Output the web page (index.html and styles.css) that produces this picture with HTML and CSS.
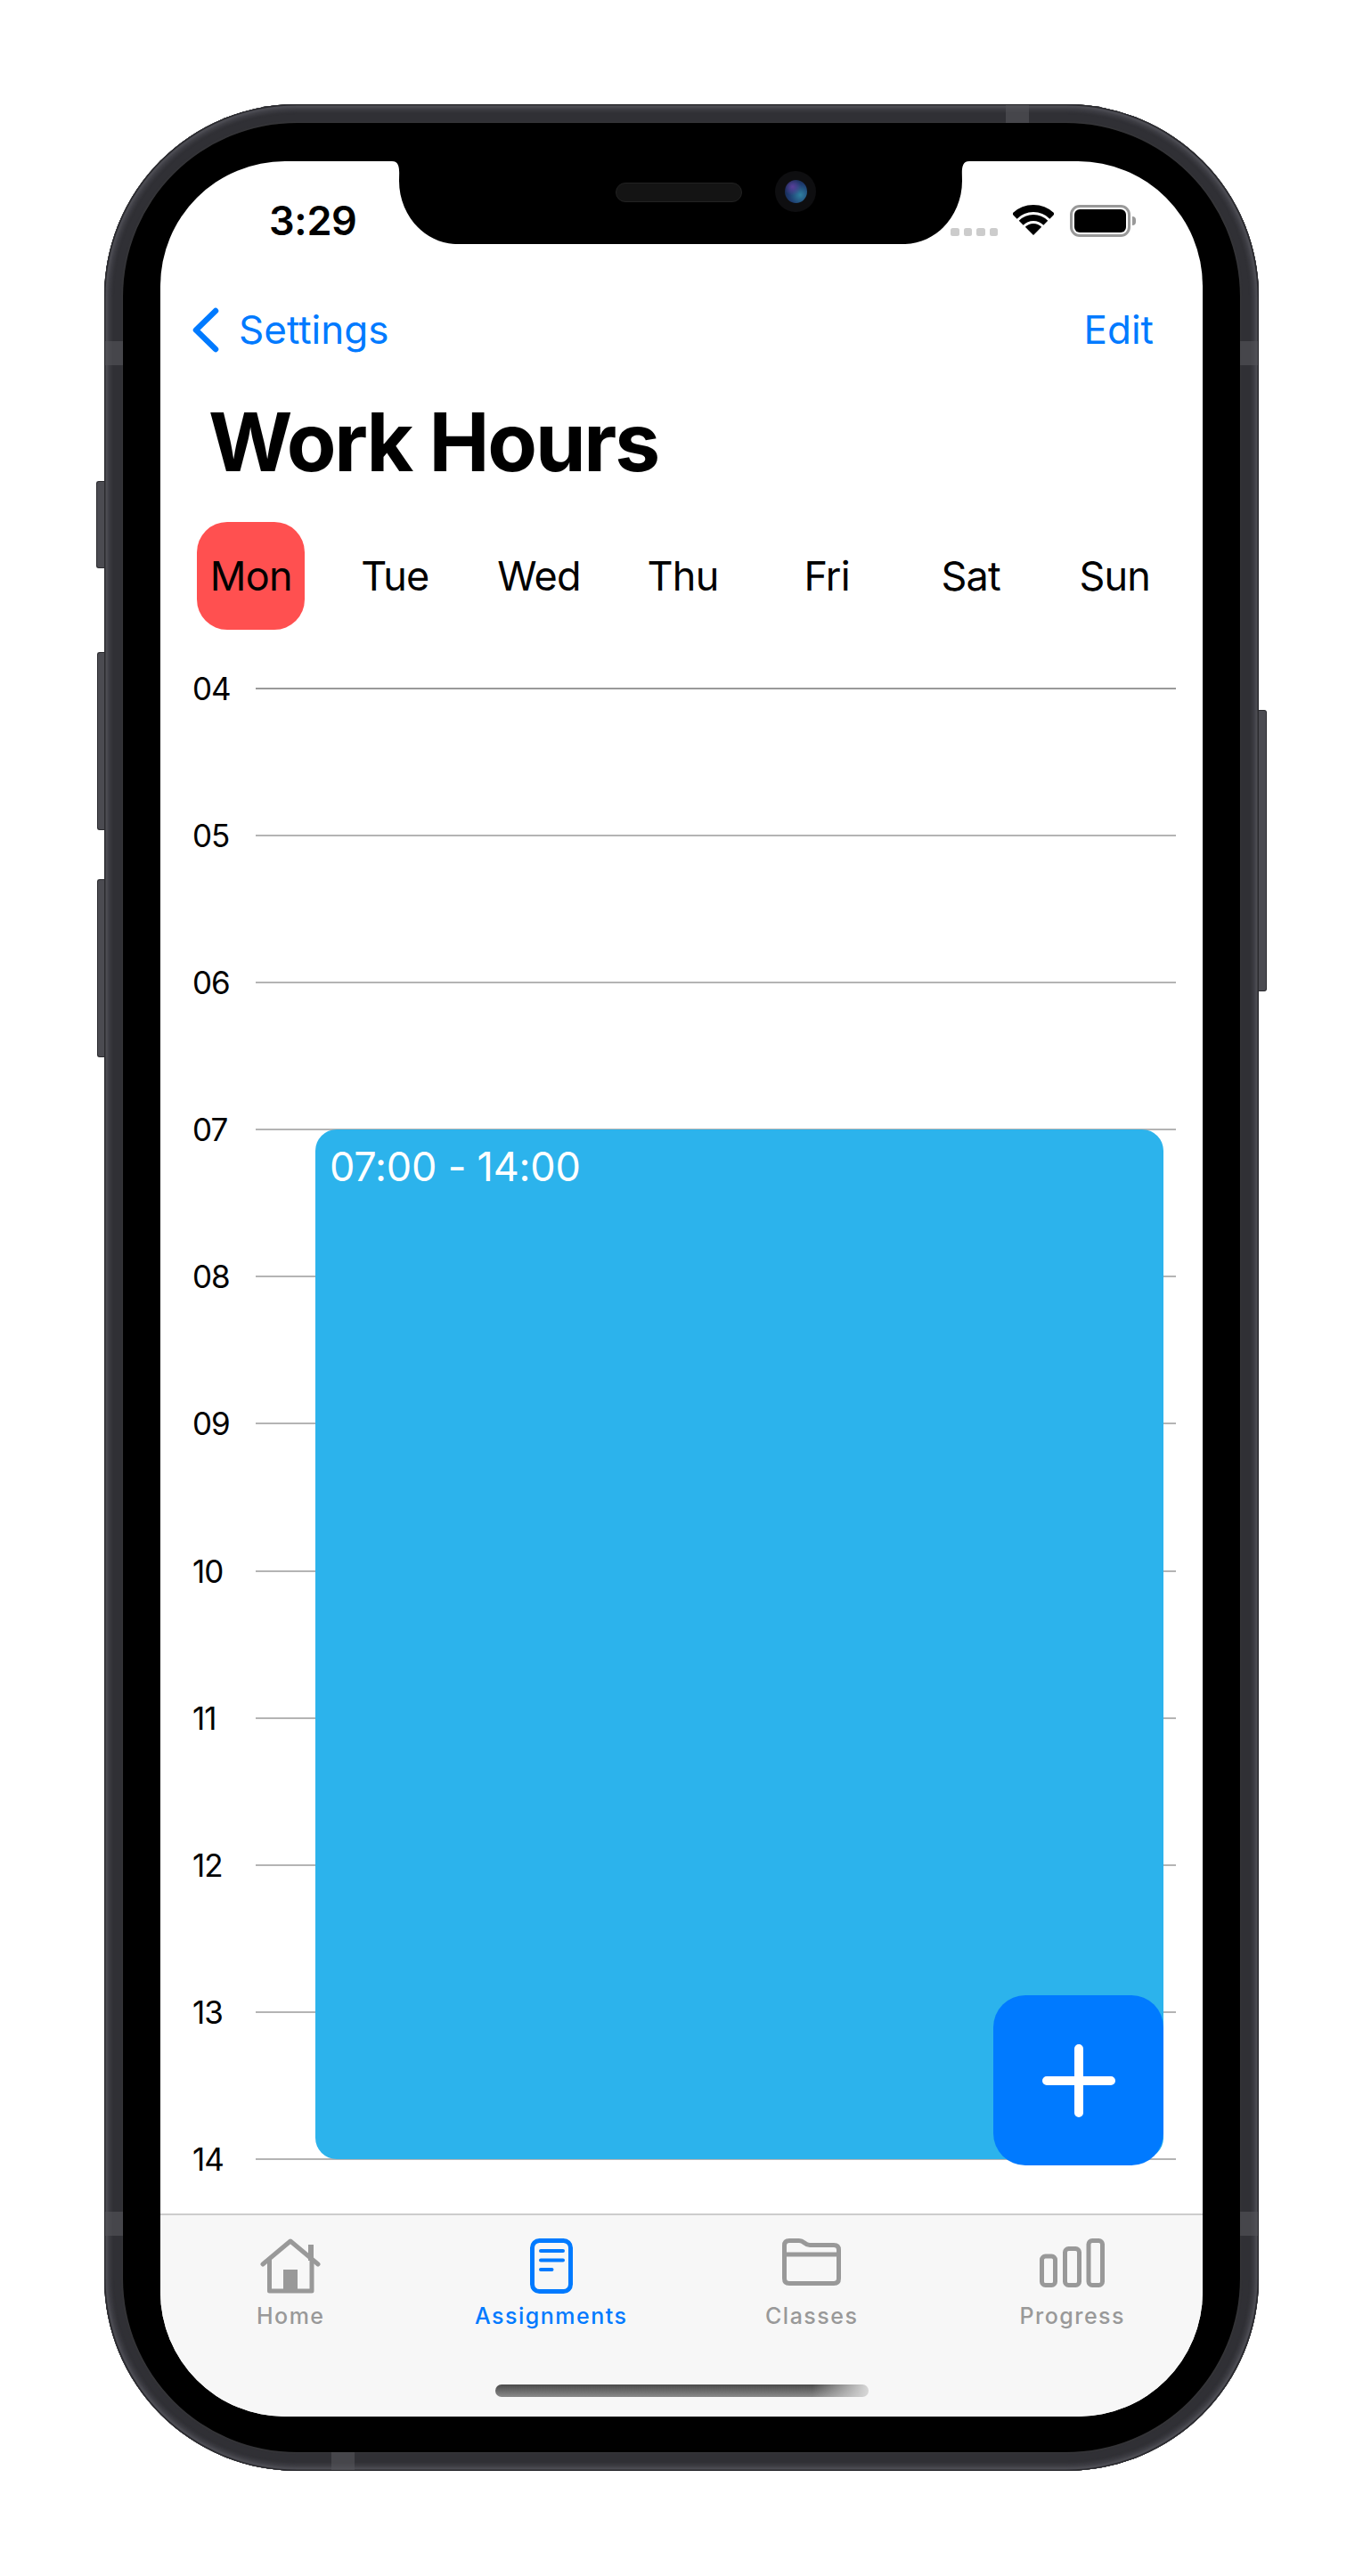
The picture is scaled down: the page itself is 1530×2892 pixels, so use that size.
FILE: index.html
```html
<!DOCTYPE html>
<html lang="en">
  <head>
    <meta charset="UTF-8" />
    <meta name="viewport" content="width=device-width, initial-scale=1.0" />
    <title>Work Hours</title>
    <link rel="stylesheet" href="styles.css">
  </head>

  <body>
    <div class="phone">
      <!-- side buttons and antenna bands of the device -->
      <span class="side-btn mute"></span>
      <span class="side-btn vol-up"></span>
      <span class="side-btn vol-down"></span>
      <span class="side-btn power"></span>
      <span class="band band-top"></span>
      <span class="band band-bottom"></span>
      <span class="band band-left-a"></span>
      <span class="band band-left-b"></span>
      <span class="band band-right-a"></span>
      <span class="band band-right-b"></span>

      <div class="screen">
        <svg class="notch" width="648" height="94" viewBox="0 0 648 94">
          <path d="M0 0 H648 C638 0 640 12 640 22 C640 60 612 93 574 93 H74 C36 93 8 60 8 22 C8 12 10 0 0 0 Z" fill="#000" />
        </svg>
        <span class="speaker"></span>
        <span class="camera"><span class="lens"></span></span>

        <div class="status">
          <span class="time">3:29</span>
          <div class="status-right">
            <div class="signal"><i></i><i></i><i></i><i></i></div>
            <svg class="wifi" width="46" height="35" viewBox="0 0 46 35">
              <path d="M1.8 12.8 A30 30 0 0 1 44.2 12.8" fill="none" stroke="#000" stroke-width="8" />
              <path d="M9.2 20.2 A19.5 19.5 0 0 1 36.8 20.2" fill="none" stroke="#000" stroke-width="7" />
              <path d="M23 34 L13.8 24.8 A13 13 0 0 1 32.2 24.8 Z" fill="#000" />
            </svg>
            <div class="battery"><span class="battery-level"></span></div>
          </div>
        </div>

        <div class="navbar">
          <a class="back">
            <svg width="31" height="51" viewBox="0 0 31 51">
              <path d="M27 4 L5 25.5 L27 47" fill="none" stroke="#007aff" stroke-width="6.5" stroke-linecap="round" stroke-linejoin="round" />
            </svg>
            Settings
          </a>
          <a class="edit">Edit</a>
        </div>

        <h1 class="title">Work Hours</h1>

        <div class="days">
          <div class="day active"><span>Mon</span></div>
          <div class="day"><span>Tue</span></div>
          <div class="day"><span>Wed</span></div>
          <div class="day"><span>Thu</span></div>
          <div class="day"><span>Fri</span></div>
          <div class="day"><span>Sat</span></div>
          <div class="day"><span>Sun</span></div>
        </div>

        <div class="timetable">
          <div class="hour"><span>04</span><i></i></div>
          <div class="hour"><span>05</span><i></i></div>
          <div class="hour"><span>06</span><i></i></div>
          <div class="hour"><span>07</span><i></i></div>
          <div class="hour"><span>08</span><i></i></div>
          <div class="hour"><span>09</span><i></i></div>
          <div class="hour"><span>10</span><i></i></div>
          <div class="hour"><span>11</span><i></i></div>
          <div class="hour"><span>12</span><i></i></div>
          <div class="hour"><span>13</span><i></i></div>
          <div class="hour"><span>14</span><i></i></div>

          <div class="event">07:00 - 14:00</div>
          <button class="fab" type="button">
            <svg width="82" height="82" viewBox="0 0 82 82">
              <path d="M41 5 V77 M5 41 H77" stroke="#fff" stroke-width="10" stroke-linecap="round" />
            </svg>
          </button>
        </div>

        <div class="tabbar">
          <div class="tab">
            <svg width="68" height="62" viewBox="0 0 68 62">
              <rect x="54" y="7" width="6" height="18" fill="#999" />
              <path d="M3 29 L34 3 L65 29" fill="none" stroke="#999" stroke-width="5" stroke-linecap="round" stroke-linejoin="round" />
              <path d="M10.5 22 V59 H58 V22" fill="none" stroke="#999" stroke-width="5" stroke-linejoin="round" />
              <rect x="26" y="35" width="16" height="24" fill="#999" />
            </svg>
            <span>Home</span>
          </div>
          <div class="tab current">
            <svg width="48" height="62" viewBox="0 0 48 62">
              <rect x="2.5" y="2.5" width="43" height="57" rx="8" fill="none" stroke="#007aff" stroke-width="5" />
              <path d="M12 14 H37 M12 24.5 H37 M12 35 H24.5" stroke="#007aff" stroke-width="4" stroke-linecap="round" />
            </svg>
            <span>Assignments</span>
          </div>
          <div class="tab">
            <svg width="66" height="62" viewBox="0 0 66 62">
              <path d="M2.5 18 V8 Q2.5 2.5 8 2.5 H19 C25 2.5 25 7.5 31 7.5 H58 Q63.5 7.5 63.5 13 V45 Q63.5 50.5 58 50.5 H8 Q2.5 50.5 2.5 45 Z M2.5 18 H63.5" fill="none" stroke="#999" stroke-width="5" stroke-linejoin="round" />
            </svg>
            <span>Classes</span>
          </div>
          <div class="tab">
            <svg width="73" height="62" viewBox="0 0 73 62">
              <rect x="2.5" y="20" width="15" height="32.5" rx="4" fill="none" stroke="#999" stroke-width="5" />
              <rect x="28.5" y="11.5" width="16" height="41" rx="4" fill="none" stroke="#999" stroke-width="5" />
              <rect x="55" y="2.5" width="15.5" height="50" rx="4" fill="none" stroke="#999" stroke-width="5" />
            </svg>
            <span>Progress</span>
          </div>
          <span class="home-indicator"></span>
        </div>
      </div>
    </div>
  </body>
</html>
```

FILE: styles.css
```css
* {
  margin: 0;
  padding: 0;
  box-sizing: border-box;
}
body {
  font-family: Inter, "Noto Sans", sans-serif;
  background-color: #ffffff;
  color: #000000;
}

/* device */
.phone {
  position: relative;
  width: 1296px;
  height: 2657px;
  margin: 117px 0 0 117px;
  padding: 64px 63px 61px;
  background-color: #000000;
  border-radius: 216px;
  box-shadow:
    inset 0 0 0 1.5px #2a2a2e,
    inset 0 0 3px 4px #4f4f56,
    inset 0 0 3px 8px #3c3c42,
    inset 0 0 2px 20px #303035,
    inset 0 0 0 21px #38383a;
}
.side-btn {
  position: absolute;
  background-color: #4b4b51;
  border: 1.5px solid #2b2b2f;
}
.mute,
.vol-up,
.vol-down {
  right: 100%;
  border-right: 0;
  border-radius: 3px 0 0 3px;
}
.mute {
  top: 423px;
  width: 9px;
  height: 98px;
}
.vol-up {
  top: 615px;
  width: 8px;
  height: 200px;
}
.vol-down {
  top: 870px;
  width: 8px;
  height: 200px;
}
.power {
  left: 100%;
  top: 680px;
  width: 9px;
  height: 316px;
  border-left: 0;
  border-radius: 0 3px 3px 0;
}
.band {
  position: absolute;
  background-color: #55555a;
  opacity: 0.6;
}
.band-top {
  top: 1px;
  left: 1012px;
  width: 26px;
  height: 20px;
}
.band-bottom {
  bottom: 1px;
  left: 255px;
  width: 26px;
  height: 20px;
}
.band-left-a,
.band-left-b {
  left: 1px;
  width: 20px;
  height: 27px;
}
.band-right-a,
.band-right-b {
  right: 1px;
  width: 20px;
  height: 27px;
}
.band-left-a,
.band-right-a {
  top: 266px;
}
.band-left-b,
.band-right-b {
  top: 2366px;
}

.screen {
  position: relative;
  display: flex;
  flex-direction: column;
  width: 1170px;
  height: 2532px;
  background-color: #ffffff;
  border-radius: 140px;
  overflow: hidden;
}
.notch {
  position: absolute;
  top: 0;
  left: 260px;
}
.speaker {
  position: absolute;
  top: 24px;
  left: 511px;
  width: 142px;
  height: 22px;
  background-color: #141414;
  border: 1px solid #222222;
  border-radius: 11px;
}
.camera {
  position: absolute;
  top: 11px;
  left: 690px;
  width: 46px;
  height: 46px;
  display: flex;
  align-items: center;
  justify-content: center;
  background-color: #0e0e10;
  border-radius: 50%;
}
.lens {
  width: 25px;
  height: 26px;
  border-radius: 50%;
  background:
    radial-gradient(circle at 35% 30%, #5a3f9a 0, transparent 40%),
    radial-gradient(circle at 70% 65%, #2f7f9f 0, #1d3c70 50%, #141a3a 100%);
}

/* status bar */
.status {
  display: flex;
  justify-content: space-between;
  padding: 49px 81px 0 122px;
}
.time {
  font-size: 45px;
  font-weight: 600;
  line-height: 36px;
  letter-spacing: -0.3px;
}
.status-right {
  display: flex;
  align-items: flex-end;
}
.signal {
  display: flex;
  gap: 5px;
  margin-right: 17px;
  padding-bottom: 1px;
}
.signal i {
  width: 9.5px;
  height: 9px;
  background-color: #cccccc;
  border-radius: 2.5px;
}
.wifi {
  margin-right: 18px;
  margin-bottom: 1px;
}
.battery {
  position: relative;
  width: 68px;
  height: 36px;
  padding: 2px;
  border: 3px solid #999999;
  border-radius: 11px;
}
.battery::after {
  content: "";
  position: absolute;
  top: 10px;
  left: 67px;
  width: 4px;
  height: 10px;
  background-color: #999999;
  border-radius: 0 4px 4px 0;
}
.battery-level {
  display: block;
  height: 100%;
  background-color: #000000;
  border-radius: 6px;
}

/* nav */
.navbar {
  display: flex;
  justify-content: space-between;
  align-items: center;
  height: 60px;
  margin-top: 74px;
  padding: 0 55px 0 35px;
  font-size: 44px;
  color: #007aff;
}
.back {
  display: flex;
  align-items: center;
  gap: 22px;
}
.title {
  margin-top: 41px;
  padding-left: 54px;
  font-size: 91px;
  font-weight: 700;
  line-height: 110px;
  letter-spacing: -2.2px;
}

/* day picker */
.days {
  display: flex;
  margin-top: 35px;
  padding: 0 18px 0 21px;
}
.day {
  flex: 1;
  display: flex;
  justify-content: center;
  font-size: 45px;
  letter-spacing: -0.8px;
}
.day span {
  display: flex;
  align-items: center;
  justify-content: center;
  width: 121px;
  height: 121px;
  border-radius: 34px;
}
.active span {
  background-color: #ff5050;
}

/* hours */
.timetable {
  position: relative;
  display: flex;
  flex-direction: column;
  gap: 125.1px;
  margin-top: 46px;
}
.hour {
  display: flex;
  align-items: center;
  height: 40px;
  padding: 0 30px 0 36px;
  font-size: 35px;
}
.hour span {
  width: 71px;
  letter-spacing: -1px;
}
.hour i {
  flex: 1;
  height: 2px;
  background-color: #b4b4b4;
}
.hour:first-child i {
  background-color: #999999;
}
.event {
  position: absolute;
  top: 515px;
  left: 174px;
  width: 952px;
  height: 1156px;
  padding: 14px 16px;
  background-color: #2cb3ec;
  border-radius: 24px;
  color: #ffffff;
  font-size: 45px;
  line-height: 56px;
  letter-spacing: -0.2px;
}
.fab {
  position: absolute;
  top: 1487px;
  left: 935px;
  display: flex;
  align-items: center;
  justify-content: center;
  width: 191px;
  height: 191px;
  background-color: #007aff;
  border: none;
  border-radius: 36px;
}

/* tab bar */
.tabbar {
  position: relative;
  display: flex;
  height: 228px;
  margin-top: auto;
  padding-top: 26px;
  background-color: #f7f7f7;
  border-top: 2px solid #cccccc;
}
.tab {
  flex: 1;
  display: flex;
  flex-direction: column;
  align-items: center;
  gap: 7px;
  font-size: 25px;
  font-weight: 500;
  line-height: 36px;
  letter-spacing: 1.5px;
  color: #999999;
}
.current {
  color: #007aff;
}
.home-indicator {
  position: absolute;
  bottom: 22px;
  left: 376px;
  width: 419px;
  height: 14px;
  border-radius: 7px;
  background: linear-gradient(90deg, transparent 85%, #d8d8d8 100%), linear-gradient(180deg, #4a4a4a, #8a8a8a);
}
```
